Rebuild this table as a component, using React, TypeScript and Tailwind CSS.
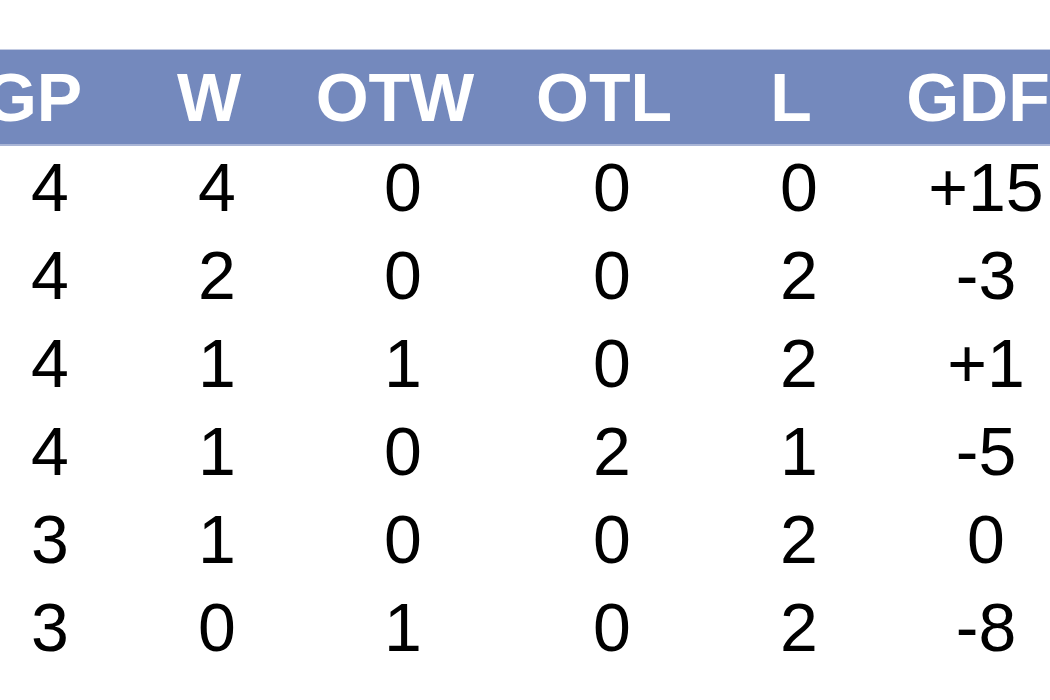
import React from 'react';

const rows = [
  ['4', '4', '0', '0', '0', '+15'],
  ['4', '2', '0', '0', '2', '-3'],
  ['4', '1', '1', '0', '2', '+1'],
  ['4', '1', '0', '2', '1', '-5'],
  ['3', '1', '0', '0', '2', '0'],
  ['3', '0', '1', '0', '2', '-8'],
];

const headers = ['GP', 'W', 'OTW', 'OTL', 'L', 'GDF'];

// column widths chosen so cell centres line up with the standings screenshot
const cols = 'grid grid-cols-[180px_154px_218px_200px_174px_200px]';

const App: React.FC = () => {
  return (
    <div
      className="w-[1050px] h-[700px] overflow-hidden bg-white"
      style={{ fontFamily: '"Liberation Sans", Arial, sans-serif' }}
    >
      <div className="h-[49px]" />
      <div className="h-[97px] bg-[#7489bd] border-t border-[#c3cbe2] border-b-2 border-b-[#a9b5d6]">
        <div className={`${cols} -ml-[48px] w-[1126px]`}>
          {headers.map((h, i) => (
            <div
              key={h}
              className={`text-center text-white font-bold text-[68px] leading-[94px] ${i === 0 ? 'pr-[18px]' : ''}`}
            >
              {h}
            </div>
          ))}
        </div>
      </div>
      <div className="-ml-[40px] w-[1126px]">
        {rows.map((r, ri) => (
          <div key={ri} className={`${cols} h-[88px]`}>
            {r.map((v, ci) => (
              <div key={ci} className="text-center text-black text-[68px] leading-[83px]">
                {v}
              </div>
            ))}
          </div>
        ))}
      </div>
    </div>
  );
};

export default App;
